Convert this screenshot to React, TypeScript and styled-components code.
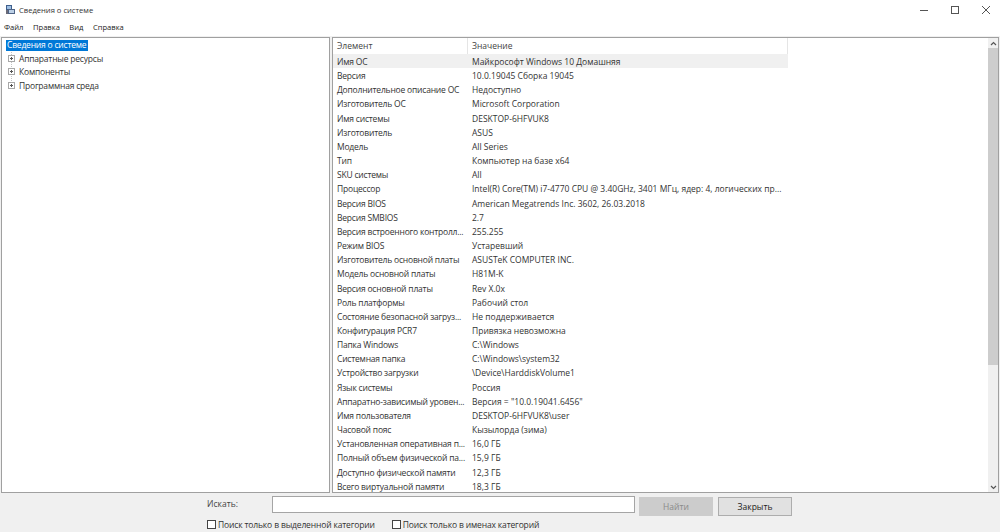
import React from "react";
import styled, { createGlobalStyle } from "styled-components";

const rows: [string, string][] = [
    ["Имя ОС", "Майкрософт Windows 10 Домашняя"],
    ["Версия", "10.0.19045 Сборка 19045"],
    ["Дополнительное описание ОС", "Недоступно"],
    ["Изготовитель ОС", "Microsoft Corporation"],
    ["Имя системы", "DESKTOP-6HFVUK8"],
    ["Изготовитель", "ASUS"],
    ["Модель", "All Series"],
    ["Тип", "Компьютер на базе x64"],
    ["SKU системы", "All"],
    ["Процессор", "Intel(R) Core(TM) i7-4770 CPU @ 3.40GHz, 3401 МГц, ядер: 4, логических пр..."],
    ["Версия BIOS", "American Megatrends Inc. 3602, 26.03.2018"],
    ["Версия SMBIOS", "2.7"],
    ["Версия встроенного контролл...", "255.255"],
    ["Режим BIOS", "Устаревший"],
    ["Изготовитель основной платы", "ASUSTeK COMPUTER INC."],
    ["Модель основной платы", "H81M-K"],
    ["Версия основной платы", "Rev X.0x"],
    ["Роль платформы", "Рабочий стол"],
    ["Состояние безопасной загруз...", "Не поддерживается"],
    ["Конфигурация PCR7", "Привязка невозможна"],
    ["Папка Windows", "C:\\Windows"],
    ["Системная папка", "C:\\Windows\\system32"],
    ["Устройство загрузки", "\\Device\\HarddiskVolume1"],
    ["Язык системы", "Россия"],
    ["Аппаратно-зависимый уровен...", "Версия = \"10.0.19041.6456\""],
    ["Имя пользователя", "DESKTOP-6HFVUK8\\user"],
    ["Часовой пояс", "Кызылорда (зима)"],
    ["Установленная оперативная п...", "16,0 ГБ"],
    ["Полный объем физической па...", "15,9 ГБ"],
    ["Доступно физической памяти", "12,3 ГБ"],
    ["Всего виртуальной памяти", "18,3 ГБ"],
];

const GlobalStyle = createGlobalStyle`
    html, body {
        margin: 0;
        padding: 0;
        overflow: hidden;
    }
    * {
        box-sizing: border-box;
    }
`;

const Window = styled.div`
    width: 1000px;
    height: 532px;
    display: flex;
    flex-direction: column;
    background: #f0f0f0;
    color: #222;
    font-family: "Open Sans", "Noto Sans", sans-serif;
    font-size: 8.5px;
    overflow: hidden;
`;

const TitleBar = styled.div`
    height: 19px;
    background: #fff;
    display: flex;
    align-items: center;
    padding-left: 5px;
    margin-right: -1px;
    flex-shrink: 0;
`;

const TitleText = styled.span`
    margin-left: 4px;
    flex: 1;
    color: #333;
    font-size: 7.6px;
`;

const WindowButton = styled.div`
    width: 31px;
    height: 19px;
    display: flex;
    align-items: center;
    justify-content: center;
`;

const MenuBar = styled.div`
    height: 17px;
    background: #fff;
    display: flex;
    align-items: center;
    gap: 9.5px;
    padding: 0 0 1px 4px;
    flex-shrink: 0;
    font-size: 7.6px;
`;

const Panes = styled.div`
    height: 457px;
    display: flex;
    gap: 2px;
    padding: 0 1px;
    border-top: 1px solid #f0f0f0;
    flex-shrink: 0;
`;

const TreePane = styled.div`
    width: 329px;
    background: #fff;
    border: 1px solid #a0a0a0;
    padding: 2px 0 0 4px;
    letter-spacing: -0.2px;
`;

const TreeRoot = styled.div`
    height: 11px;
    line-height: 10px;
    width: 82px;
    background: #0078d7;
    color: #fff;
    padding-left: 1px;
    white-space: nowrap;
    margin-bottom: 0.5px;
`;

const TreeGroup = styled.div`
    background-image: repeating-linear-gradient(to bottom, #c4c4c4 0 1px, transparent 1px 2px);
    background-size: 1px 30px;
    background-position: 5px 0;
    background-repeat: no-repeat;
`;

const TreeRow = styled.div`
    height: 13.6px;
    display: flex;
    align-items: center;
    gap: 4px;
    padding-left: 2px;
    color: #333;
`;

const ListPane = styled.div`
    flex: 1;
    background: #fff;
    border: 1px solid #a0a0a0;
    display: flex;
    overflow: hidden;
`;

const Table = styled.div`
    flex: 1;
    min-width: 0;
`;

const HeaderRow = styled.div`
    width: 455px;
    height: 16px;
    display: grid;
    grid-template-columns: 135px 1fr;
    align-items: center;
    border-right: 1px solid #e5e5e5;
    color: #444;
`;

const HeaderCell = styled.div<{ $divider?: boolean }>`
    height: 100%;
    line-height: 16px;
    padding-left: 4px;
    border-right: ${(p) => (p.$divider ? "1px solid #e5e5e5" : "none")};
`;

const Row = styled.div<{ $selected?: boolean }>`
    width: 455px;
    height: 14.17px;
    line-height: 16px;
    display: grid;
    grid-template-columns: 135px 1fr;
    background: ${(p) => (p.$selected ? "#f0f0f0" : "transparent")};
    color: #333;
    white-space: nowrap;
`;

const NameCell = styled.div`
    padding-left: 4px;
    min-width: 0;
    letter-spacing: -0.2px;
`;

const ValueCell = styled.div`
    padding-left: 4px;
    min-width: 0;
`;

const Scrollbar = styled.div`
    width: 10px;
    margin-left: auto;
    background: #f0f0f0;
    display: flex;
    flex-direction: column;
    flex-shrink: 0;
`;

const ScrollArrow = styled.div`
    height: 10px;
    display: flex;
    align-items: center;
    justify-content: center;
    flex-shrink: 0;
`;

const ScrollTrack = styled.div`
    flex: 1;
`;

const ScrollThumb = styled.div`
    height: 317px;
    background: #cdcdcd;
`;

const SearchBar = styled.div`
    flex: 1;
    display: grid;
    grid-template-columns: 272px 363px 165px;
    grid-template-rows: 21px 14px;
    padding-top: 3px;
    align-content: start;
`;

const SearchLabel = styled.div`
    padding-left: 207px;
    line-height: 15px;
    color: #444;
`;

const SearchInput = styled.div`
    background: #fff;
    border: 1px solid #a5a5a5;
    height: 17px;
`;

const Buttons = styled.div`
    display: flex;
    gap: 5px;
    padding: 1px 0 0 4px;
`;

const Button = styled.div<{ $disabled?: boolean }>`
    width: 74px;
    height: 19px;
    line-height: 17px;
    text-align: center;
    border: 1px solid ${(p) => (p.$disabled ? "#cccccc" : "#adadad")};
    background: ${(p) => (p.$disabled ? "#cccccc" : "#e1e1e1")};
    color: ${(p) => (p.$disabled ? "#8a8a8a" : "#222")};
`;

const Checks = styled.div`
    grid-column: 1 / -1;
    display: flex;
    gap: 17px;
    padding-left: 207px;
    letter-spacing: -0.15px;
`;

const CheckLabel = styled.label`
    display: flex;
    align-items: center;
    gap: 2px;
    color: #333;
`;

const CheckBox = styled.span`
    width: 9px;
    height: 9px;
    border: 1px solid #444;
    background: #fff;
    display: block;
`;

const AppIcon = () => (
    <svg width="10" height="10" viewBox="0 0 10 10">
        <rect x="1" y="0" width="6" height="5" fill="#3f5f8c" />
        <rect x="2" y="1" width="4" height="3" fill="#9fc0e4" />
        <rect x="3" y="4" width="7" height="5" fill="#4f6486" />
        <rect x="4" y="5" width="5" height="3" fill="#bcd0e6" />
        <rect x="1" y="5" width="2" height="4" fill="#6b6b78" />
    </svg>
);

const Expander = () => (
    <svg width="7" height="7" viewBox="0 0 7 7">
        <rect x="0.5" y="0.5" width="6" height="6" fill="#fff" stroke="#a8a8a8" />
        <path d="M2 3.5h3M3.5 2v3" stroke="#555" />
    </svg>
);

const Chevron = ({ down }: { down?: boolean }) => (
    <svg width="7" height="5" viewBox="0 0 7 5">
        <path d={down ? "M1 1l2.5 2.5L6 1" : "M1 4l2.5-2.5L6 4"} fill="none" stroke="#555" strokeWidth="1.2" />
    </svg>
);

export default function App() {
    return (
        <Window>
            <GlobalStyle />
            <TitleBar>
                <AppIcon />
                <TitleText>Сведения о системе</TitleText>
                <WindowButton>
                    <svg width="8" height="8" viewBox="0 0 8 8">
                        <path d="M0 4.5h8" stroke="#555" />
                    </svg>
                </WindowButton>
                <WindowButton>
                    <svg width="8" height="8" viewBox="0 0 8 8">
                        <rect x="0.5" y="0.5" width="7" height="7" fill="none" stroke="#555" />
                    </svg>
                </WindowButton>
                <WindowButton>
                    <svg width="8" height="8" viewBox="0 0 8 8">
                        <path d="M0 0l8 8M8 0l-8 8" stroke="#555" />
                    </svg>
                </WindowButton>
            </TitleBar>
            <MenuBar>
                <span>Файл</span>
                <span>Правка</span>
                <span>Вид</span>
                <span>Справка</span>
            </MenuBar>
            <Panes>
                <TreePane>
                    <TreeRoot>Сведения о системе</TreeRoot>
                    <TreeGroup>
                        <TreeRow>
                            <Expander />
                            Аппаратные ресурсы
                        </TreeRow>
                        <TreeRow>
                            <Expander />
                            Компоненты
                        </TreeRow>
                        <TreeRow>
                            <Expander />
                            Программная среда
                        </TreeRow>
                    </TreeGroup>
                </TreePane>
                <ListPane>
                    <Table>
                        <HeaderRow>
                            <HeaderCell $divider>Элемент</HeaderCell>
                            <HeaderCell>Значение</HeaderCell>
                        </HeaderRow>
                        {rows.map(([name, value], i) => (
                            <Row key={name} $selected={i === 0}>
                                <NameCell>{name}</NameCell>
                                <ValueCell>{value}</ValueCell>
                            </Row>
                        ))}
                    </Table>
                    <Scrollbar>
                        <ScrollArrow>
                            <Chevron />
                        </ScrollArrow>
                        <ScrollTrack>
                            <ScrollThumb />
                        </ScrollTrack>
                        <ScrollArrow>
                            <Chevron down />
                        </ScrollArrow>
                    </Scrollbar>
                </ListPane>
            </Panes>
            <SearchBar>
                <SearchLabel>Искать:</SearchLabel>
                <SearchInput />
                <Buttons>
                    <Button $disabled>Найти</Button>
                    <Button>Закрыть</Button>
                </Buttons>
                <Checks>
                    <CheckLabel>
                        <CheckBox />
                        Поиск только в выделенной категории
                    </CheckLabel>
                    <CheckLabel>
                        <CheckBox />
                        Поиск только в именах категорий
                    </CheckLabel>
                </Checks>
            </SearchBar>
        </Window>
    );
}
